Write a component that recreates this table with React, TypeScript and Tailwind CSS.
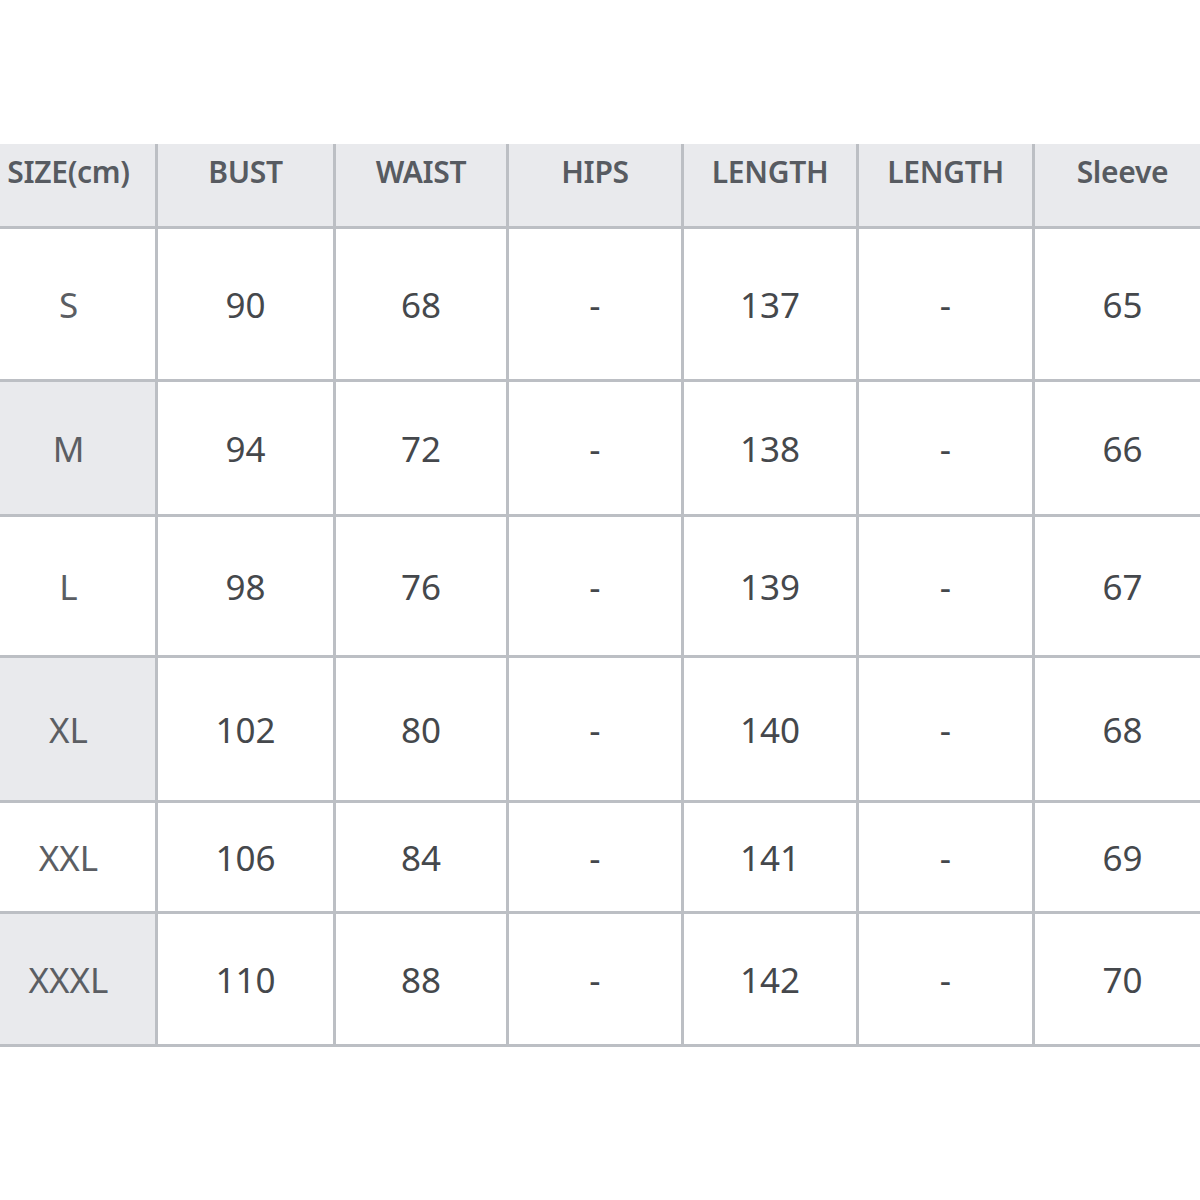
import React from 'react';

const cols = ['w-[158px]', 'w-[178px]', 'w-[173px]', 'w-[175px]', 'w-[175px]', 'w-[176px]', 'w-[165px]'];

const headers = ['SIZE(cm)', 'BUST', 'WAIST', 'HIPS', 'LENGTH', 'LENGTH', 'Sleeve'];

const rows = [
    { h: 'h-[153px]', size: 'S', vals: ['90', '68', '-', '137', '-', '65'] },
    { h: 'h-[135px]', size: 'M', vals: ['94', '72', '-', '138', '-', '66'] },
    { h: 'h-[141px]', size: 'L', vals: ['98', '76', '-', '139', '-', '67'] },
    { h: 'h-[145px]', size: 'XL', vals: ['102', '80', '-', '140', '-', '68'] },
    { h: 'h-[111px]', size: 'XXL', vals: ['106', '84', '-', '141', '-', '69'] },
    { h: 'h-[133px]', size: 'XXXL', vals: ['110', '88', '-', '142', '-', '70'] },
];

const App: React.FC = () => {
    const cellApi = "flex items-center justify-center border-b-[3px] border-[#bcbfc4]";

    return (
        <div className="w-[1200px] h-[1200px] bg-white pt-[144px] font-['Noto_Sans',sans-serif]">
            {/* header */}
            <div className="flex h-[85px] bg-[#e9eaed]">
                {headers.map((t, i) => (
                    <div
                        key={i}
                        className={`${cols[i]} ${cellApi} ${i < 6 ? 'border-r-[3px]' : 'pl-[10px]'} ${i === 0 ? 'pr-[18px]' : ''} pb-[28px] text-[30px] font-semibold text-[#575b61] tracking-[-0.3px]`}
                    >
                        {t}
                    </div>
                ))}
            </div>

            {/* body */}
            {rows.map((r, ri) => (
                <div key={ri} className={`flex ${r.h}`}>
                    <div className={`${cols[0]} ${cellApi} border-r-[3px] pr-[18px] pt-[3px] ${ri % 2 === 1 ? 'bg-[#e9eaed]' : 'bg-white'} text-[35px] text-[#5b5e63]`}>
                        {r.size}
                    </div>
                    {r.vals.map((v, vi) => (
                        <div
                            key={vi}
                            className={`${cols[vi + 1]} ${cellApi} ${vi < 5 ? 'border-r-[3px]' : 'pl-[10px]'} pt-[3px] text-[35px] text-[#45484c]`}
                        >
                            {v}
                        </div>
                    ))}
                </div>
            ))}
        </div>
    );
};

export default App;
